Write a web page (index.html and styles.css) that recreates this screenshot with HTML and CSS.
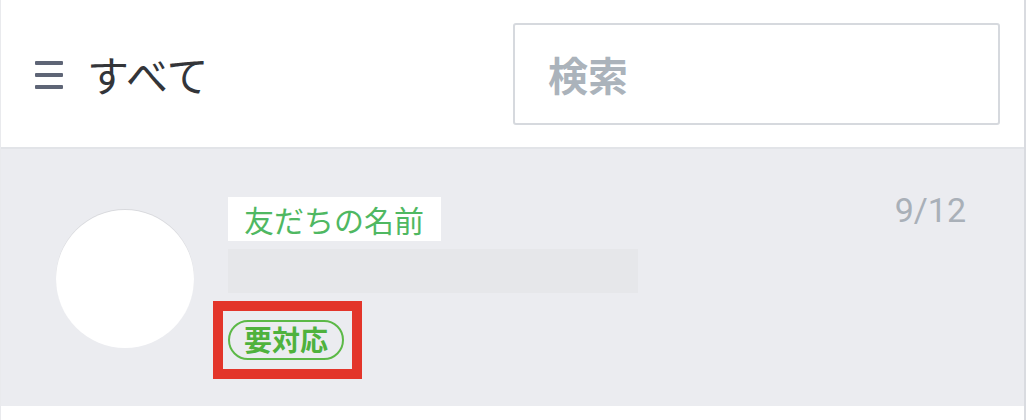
FILE: index.html
```html
<!DOCTYPE html>
<html lang="ja">
<head>
<meta charset="utf-8">
<title>すべて</title>
<link rel="stylesheet" href="styles.css">
</head>
<body>
<div class="app">
  <header class="topbar">
    <div class="menu" aria-label="menu">
      <span class="menu-line"></span>
      <span class="menu-line"></span>
      <span class="menu-line"></span>
    </div>
    <h1 class="title">すべて</h1>
    <input class="search" type="text" placeholder="検索">
  </header>
  <section class="chat-row">
    <div class="avatar"></div>
    <div class="chat-main">
      <div class="friend-name">友だちの名前</div>
      <div class="preview"></div>
      <div class="highlight">
        <span class="badge">要対応</span>
      </div>
    </div>
    <div class="date">9/12</div>
  </section>
</div>
</body>
</html>
```

FILE: styles.css
```css
* {
  box-sizing: border-box;
}

html, body {
  margin: 0;
  padding: 0;
  background: #ffffff;
}

body {
  font-family: "Noto Sans CJK JP", "Noto Sans", sans-serif;
}

.app {
  width: 1026px;
  height: 420px;
  border-left: 1px solid #e9eaed;
  border-right: 2px solid #d9dbe0;
  background: #ffffff;
}

.topbar {
  height: 149px;
  display: flex;
  align-items: center;
  padding: 0 24px 0 34px;
  border-bottom: 2px solid #e2e4e8;
}

.menu {
  width: 28px;
  display: flex;
  flex-direction: column;
  gap: 8px;
  margin-top: 2px;
}

.menu-line {
  display: block;
  height: 4px;
  background: #5e6576;
  border-radius: 1px;
}

.title {
  margin: 0 0 0 24px;
  font-size: 42px;
  font-weight: 400;
  color: #333539;
  line-height: 1;
}

.search {
  margin-left: auto;
  width: 487px;
  height: 102px;
  border: 2px solid #d6d9de;
  border-radius: 3px;
  padding: 0 0 0 33px;
  font-family: "Noto Sans CJK JP", sans-serif;
  font-size: 40px;
  font-weight: 700;
  color: #333;
  background: #ffffff;
  outline: none;
}

.search::placeholder {
  color: #abb3bb;
  opacity: 1;
}

.chat-row {
  height: 257px;
  background: #ebecf0;
  display: flex;
  align-items: flex-start;
  padding: 41px 58px 0 55px;
}

.avatar {
  width: 138px;
  height: 138px;
  border-radius: 50%;
  background: #ffffff;
  margin-top: 20px;
  flex-shrink: 0;
  box-shadow: 0 -1px 0 rgba(0, 0, 0, 0.08);
}

.chat-main {
  margin: 7px 0 0 34px;
  display: flex;
  flex-direction: column;
  align-items: flex-start;
}

.friend-name {
  height: 44px;
  background: #ffffff;
  color: #4fb862;
  font-size: 30px;
  line-height: 44px;
  padding: 0 17px 0 16px;
  font-weight: 400;
}

.preview {
  width: 410px;
  height: 44px;
  margin-top: 8px;
  background: #e6e7ea;
}

.highlight {
  margin: 8px 0 0 -15px;
  border: 10px solid #e3352a;
  padding: 9px 8px 9px 5px;
}

.badge {
  display: block;
  height: 40px;
  border: 2.5px solid #5cb947;
  border-radius: 20px;
  padding: 0 14px;
  color: #4fb23d;
  font-size: 28px;
  font-weight: 700;
  line-height: 35px;
}

.date {
  margin: 0 0 0 auto;
  font-family: Roboto, "Liberation Sans", sans-serif;
  font-size: 34px;
  line-height: 40px;
  color: #a9b0b8;
}
```
